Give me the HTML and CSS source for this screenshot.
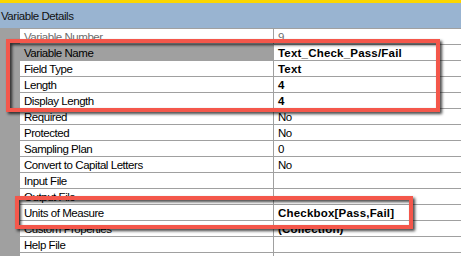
FILE: index.html
```html
<!DOCTYPE html>
<html>
<head>
<meta charset="utf-8">
<link rel="stylesheet" href="styles.css">
</head>
<body>
<div class="topbar"></div>
<div class="header">Variable Details</div>
<div class="grid">
  <div class="gutter"></div>
  <div class="table">
    <div class="row disabled"><div class="name">Variable Number</div><div class="value">9</div></div>
    <div class="row selected"><div class="name">Variable Name</div><div class="value bold">Text_Check_Pass/Fail</div></div>
    <div class="row"><div class="name">Field Type</div><div class="value bold">Text</div></div>
    <div class="row"><div class="name">Length</div><div class="value bold">4</div></div>
    <div class="row"><div class="name">Display Length</div><div class="value bold">4</div></div>
    <div class="row"><div class="name">Required</div><div class="value">No</div></div>
    <div class="row"><div class="name">Protected</div><div class="value">No</div></div>
    <div class="row"><div class="name">Sampling Plan</div><div class="value">0</div></div>
    <div class="row"><div class="name">Convert to Capital Letters</div><div class="value">No</div></div>
    <div class="row"><div class="name">Input File</div><div class="value"></div></div>
    <div class="row"><div class="name">Output File</div><div class="value"></div></div>
    <div class="row"><div class="name">Units of Measure</div><div class="value bold">Checkbox[Pass,Fail]</div></div>
    <div class="row"><div class="name">Custom Properties</div><div class="value bold">(Collection)</div></div>
    <div class="row"><div class="name">Help File</div><div class="value"></div></div>
    <div class="row"><div class="name"></div><div class="value"></div></div>
  </div>
</div>
<div class="callout callout-top"></div>
<div class="callout callout-bottom"></div>
</body>
</html>
```
FILE: styles.css
```css
html, body {
  margin: 0;
  padding: 0;
}
body {
  width: 461px;
  height: 256px;
  overflow: hidden;
  position: relative;
  background: #ffffff;
  font-family: "Liberation Sans", Arial, sans-serif;
  font-size: 11.5px;
  letter-spacing: -0.45px;
  color: #000;
}
.topbar {
  height: 3px;
  background: #fcd600;
}
.header {
  height: 25px;
  box-sizing: border-box;
  background: #99b4d1;
  padding: 7px 0 0 1px;
  line-height: 13px;
  color: #111;
}
.grid {
  display: flex;
  height: 228px;
}
.gutter {
  width: 20px;
  flex: none;
  background: #a0a0a0;
}
.table {
  flex: 1;
  display: flex;
  flex-direction: column;
}
.row {
  display: grid;
  grid-template-columns: 254px 1fr;
  height: 16px;
  flex: none;
  box-sizing: border-box;
  border-top: 1px solid #a0a0a0;
}
.name, .value {
  height: 15px;
  box-sizing: border-box;
  padding-top: 2px;
  line-height: 13px;
  white-space: nowrap;
  overflow: hidden;
}
.name {
  padding-left: 4px;
  border-right: 1px solid #a0a0a0;
}
.value {
  padding-left: 4px;
}
.bold {
  font-weight: bold;
  letter-spacing: 0.2px;
}
.disabled .name, .disabled .value {
  color: #6d6d6d;
}
.selected .name {
  background: #a0a0a0;
}
.callout {
  position: absolute;
  box-sizing: border-box;
  border: 4px solid #f4574b;
  filter: drop-shadow(2px 2px 1.5px rgba(0, 0, 0, 0.75));
}
.callout-top {
  left: 6px;
  top: 39px;
  width: 434px;
  height: 73px;
}
.callout-bottom {
  left: 15px;
  top: 196px;
  width: 398px;
  height: 33px;
}
```
